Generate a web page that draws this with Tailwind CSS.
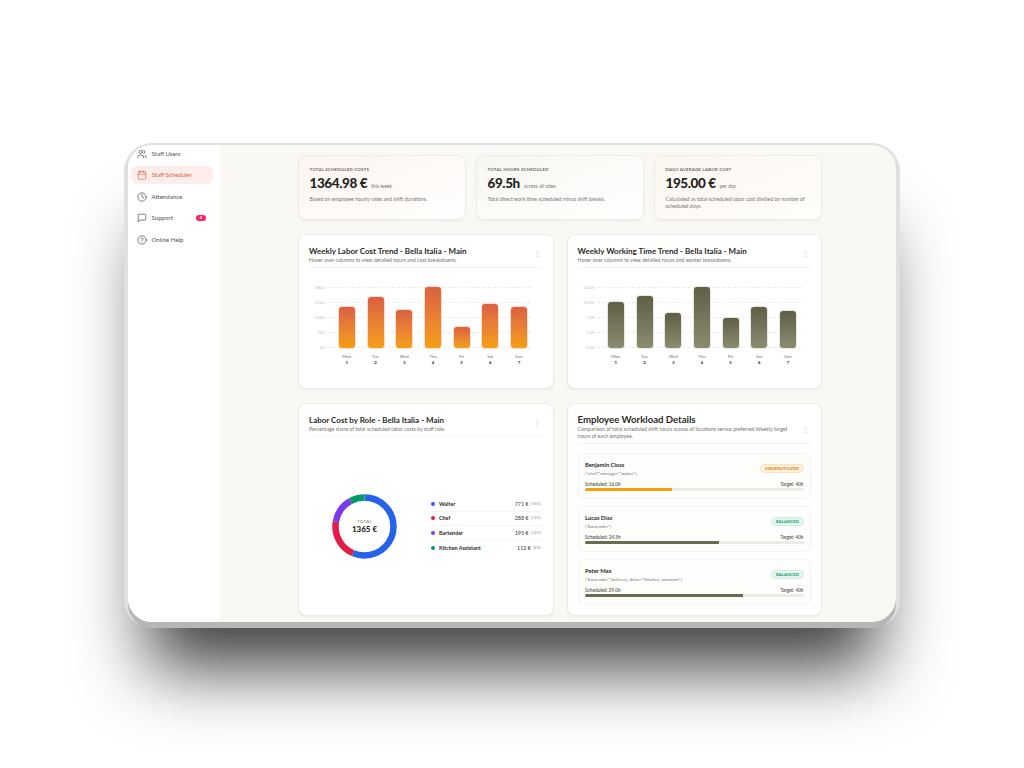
<!DOCTYPE html>
<html lang="en">
<head>
<meta charset="utf-8">
<title>Staff Scheduler</title>
<script src="https://cdn.jsdelivr.net/npm/@tailwindcss/browser@4"></script>
</head>
<body class="bg-white font-['Lato','Noto_Sans',sans-serif] text-[#2b2a28] overflow-hidden">
<div class="w-[1024px] h-[768px] pt-[145px] pl-[128px] overflow-hidden">
  <div class="flex w-[768px] h-[477px] rounded-[24px] overflow-hidden bg-[#f9f8f4] shadow-[0_6px_0_0_#b6b6b6,0_2px_0_4px_#e0e0e0,0_66px_70px_-20px_rgba(0,0,0,0.76)]">
    <!-- Sidebar -->
    <aside class="w-[92px] shrink-0 bg-white pl-[3px] pr-[7px] -mt-[0.5px] flex flex-col gap-[3.5px] text-[6.1px] font-medium text-[#5f5f5a]">
      <div class="h-[18px] flex items-center gap-[4.5px] pl-[6px]">
        <svg class="w-[10px] h-[10px]" viewBox="0 0 24 24" fill="none" stroke="#55554f" stroke-width="1.8" stroke-linecap="round" stroke-linejoin="round"><path d="M16 21v-2a4 4 0 0 0-4-4H6a4 4 0 0 0-4 4v2"/><circle cx="9" cy="7" r="4"/><path d="M22 21v-2a4 4 0 0 0-3-3.87"/><path d="M16 3.13a4 4 0 0 1 0 7.75"/></svg>
        <span>Staff Users</span>
      </div>
      <div class="h-[18px] flex items-center gap-[4.5px] pl-[6px] rounded-[6px] bg-[#fdeeeb] text-[#e2674f]">
        <svg class="w-[10px] h-[10px]" viewBox="0 0 24 24" fill="none" stroke="#e2674f" stroke-width="1.8" stroke-linecap="round" stroke-linejoin="round"><rect x="3" y="4" width="18" height="18" rx="2"/><path d="M16 2v4M8 2v4M3 10h18"/></svg>
        <span>Staff Scheduler</span>
      </div>
      <div class="h-[18px] flex items-center gap-[4.5px] pl-[6px]">
        <svg class="w-[10px] h-[10px]" viewBox="0 0 24 24" fill="none" stroke="#55554f" stroke-width="1.8" stroke-linecap="round" stroke-linejoin="round"><circle cx="12" cy="12" r="10"/><path d="M12 6v6l4 2"/></svg>
        <span>Attendance</span>
      </div>
      <div class="h-[18px] flex items-center gap-[4.5px] pl-[6px] pr-[7px]">
        <svg class="w-[10px] h-[10px]" viewBox="0 0 24 24" fill="none" stroke="#55554f" stroke-width="1.8" stroke-linecap="round" stroke-linejoin="round"><path d="M21 15a2 2 0 0 1-2 2H7l-4 4V5a2 2 0 0 1 2-2h14a2 2 0 0 1 2 2z"/></svg>
        <span class="flex-1">Support</span>
        <span class="w-[10px] h-[6.5px] rounded-full bg-[#f5245f] text-white text-[4px] font-bold flex items-center justify-center">4</span>
      </div>
      <div class="h-[18px] flex items-center gap-[4.5px] pl-[6px]">
        <svg class="w-[10px] h-[10px]" viewBox="0 0 24 24" fill="none" stroke="#55554f" stroke-width="1.8" stroke-linecap="round" stroke-linejoin="round"><circle cx="12" cy="12" r="10"/><path d="M9.1 9a3 3 0 0 1 5.8 1c0 2-3 3-3 3"/><path d="M12 17h.01"/></svg>
        <span>Online Help</span>
      </div>
    </aside>
    <!-- Main -->
    <main class="flex-1 pl-[78px] pt-[10px]">
      <div class="w-[524px] flex flex-col gap-[14px]">
        <!-- KPI -->
        <div class="grid grid-cols-3 gap-[10px]">
          <div class="h-[65px] rounded-[8px] border border-[#eeece7] shadow-[0_1px_2px_rgba(0,0,0,0.06)] bg-gradient-to-br from-[#fcf4ef] to-white px-[10.5px] pt-[11px]">
            <div class="text-[4.4px] leading-[6px] font-bold tracking-[0.2px] uppercase text-[#6f6e68]">Total Scheduled Costs</div>
            <div class="flex items-baseline gap-[4px] mt-[2px] h-[16px] leading-[16px]"><span class="text-[13.5px] font-black tracking-[-0.4px] text-[#262522]">1364.98 €</span><span class="text-[5px] text-[#77766f]">this week</span></div>
            <div class="text-[5.2px] leading-[7.2px] mt-[4.5px] text-[#77766f]">Based on employee hourly rates and shift durations.</div>
          </div>
          <div class="h-[65px] rounded-[8px] border border-[#eeece7] shadow-[0_1px_2px_rgba(0,0,0,0.06)] bg-gradient-to-br from-[#f6f6f1] to-white px-[10.5px] pt-[11px]">
            <div class="text-[4.4px] leading-[6px] font-bold tracking-[0.2px] uppercase text-[#6f6e68]">Total Hours Scheduled</div>
            <div class="flex items-baseline gap-[4px] mt-[2px] h-[16px] leading-[16px]"><span class="text-[13.5px] font-black tracking-[-0.4px] text-[#262522]">69.5h</span><span class="text-[5px] text-[#77766f]">across all roles</span></div>
            <div class="text-[5.2px] leading-[7.2px] mt-[4.5px] text-[#77766f]">Total direct work time scheduled minus shift breaks.</div>
          </div>
          <div class="h-[65px] rounded-[8px] border border-[#eeece7] shadow-[0_1px_2px_rgba(0,0,0,0.06)] bg-gradient-to-br from-[#fbf5ef] to-[#fffefb] px-[10.5px] pt-[11px]">
            <div class="text-[4.4px] leading-[6px] font-bold tracking-[0.2px] uppercase text-[#6f6e68]">Daily Average Labor Cost</div>
            <div class="flex items-baseline gap-[4px] mt-[2px] h-[16px] leading-[16px]"><span class="text-[13.5px] font-black tracking-[-0.4px] text-[#262522]">195.00 €</span><span class="text-[5px] text-[#77766f]">per day</span></div>
            <div class="text-[5.2px] leading-[7.2px] mt-[4.5px] text-[#77766f]">Calculated as total scheduled labor cost divided by number of scheduled days.</div>
          </div>
        </div>
        <!-- Charts -->
        <div class="grid grid-cols-2 gap-[13px]">
          <section class="h-[155px] rounded-[8px] bg-white border border-[#eeece7] shadow-[0_1px_2px_rgba(0,0,0,0.06)] px-[10px] pt-[11px]">
            <div class="relative border-b border-[#f3f2ee] h-[22px]">
              <h2 class="text-[8px] leading-[10px] font-bold text-[#2b2a28]">Weekly Labor Cost Trend - Bella Italia - Main</h2>
              <p class="text-[5.2px] leading-[7px] mt-[1px] text-[#77766f]">Hover over columns to view detailed hours and cost breakdowns.</p>
              <svg class="absolute right-[4px] top-[5px] w-[3px] h-[6px]" viewBox="0 0 3 6" fill="#cfcfca"><circle cx="0.6" cy="0.7" r="0.5"/><circle cx="2.4" cy="0.7" r="0.5"/><circle cx="0.6" cy="3" r="0.5"/><circle cx="2.4" cy="3" r="0.5"/><circle cx="0.6" cy="5.3" r="0.5"/><circle cx="2.4" cy="5.3" r="0.5"/></svg>
            </div>
            <div class="relative ml-[18px] w-[204px] h-[61px] mt-[19px]">
              <div class="absolute inset-0 flex flex-col justify-between">
                <div class="relative border-t border-dashed border-[#ecebe7]"><span class="absolute right-full mr-[2px] -top-[3px] text-[4.4px] leading-[5px] text-[#c4c3bd]">280€</span></div>
                <div class="relative border-t border-dashed border-[#ecebe7]"><span class="absolute right-full mr-[2px] -top-[3px] text-[4.4px] leading-[5px] text-[#c4c3bd]">210€</span></div>
                <div class="relative border-t border-dashed border-[#ecebe7]"><span class="absolute right-full mr-[2px] -top-[3px] text-[4.4px] leading-[5px] text-[#c4c3bd]">140€</span></div>
                <div class="relative border-t border-dashed border-[#ecebe7]"><span class="absolute right-full mr-[2px] -top-[3px] text-[4.4px] leading-[5px] text-[#c4c3bd]">70€</span></div>
                <div class="relative border-t border-dashed border-[#ecebe7]"><span class="absolute right-full mr-[2px] -top-[3px] text-[4.4px] leading-[5px] text-[#c4c3bd]">0€</span></div>
              </div>
              <div class="relative h-full pl-[5.5px] grid grid-cols-[repeat(7,28.7px)] items-end justify-items-center">
                <div class="w-[16px] h-[41px] rounded-[3px] bg-gradient-to-b from-[#db6040] to-[#f59f10] ring-1 ring-[#f8b9a5]/50"></div>
                <div class="w-[16px] h-[51px] rounded-[3px] bg-gradient-to-b from-[#db6040] to-[#f59f10] ring-1 ring-[#f8b9a5]/50"></div>
                <div class="w-[16px] h-[38px] rounded-[3px] bg-gradient-to-b from-[#db6040] to-[#f59f10] ring-1 ring-[#f8b9a5]/50"></div>
                <div class="w-[16px] h-[61px] rounded-[3px] bg-gradient-to-b from-[#db6040] to-[#f59f10] ring-1 ring-[#f8b9a5]/50"></div>
                <div class="w-[16px] h-[21px] rounded-[3px] bg-gradient-to-b from-[#db6040] to-[#f59f10] ring-1 ring-[#f8b9a5]/50"></div>
                <div class="w-[16px] h-[44px] rounded-[3px] bg-gradient-to-b from-[#db6040] to-[#f59f10] ring-1 ring-[#f8b9a5]/50"></div>
                <div class="w-[16px] h-[41px] rounded-[3px] bg-gradient-to-b from-[#db6040] to-[#f59f10] ring-1 ring-[#f8b9a5]/50"></div>
              </div>
              <div class="pl-[5.5px] grid grid-cols-[repeat(7,28.7px)] justify-items-center mt-[6px] text-[4.4px] leading-[5.5px] text-center text-[#6f6e68]">
                <div>Mon<div class="font-bold text-[#2b2a28]">1</div></div>
                <div>Tue<div class="font-bold text-[#2b2a28]">2</div></div>
                <div>Wed<div class="font-bold text-[#2b2a28]">3</div></div>
                <div>Thu<div class="font-bold text-[#2b2a28]">4</div></div>
                <div>Fri<div class="font-bold text-[#2b2a28]">5</div></div>
                <div>Sat<div class="font-bold text-[#2b2a28]">6</div></div>
                <div>Sun<div class="font-bold text-[#2b2a28]">7</div></div>
              </div>
            </div>
          </section>
          <section class="h-[155px] rounded-[8px] bg-white border border-[#eeece7] shadow-[0_1px_2px_rgba(0,0,0,0.06)] px-[10px] pt-[11px]">
            <div class="relative border-b border-[#f3f2ee] h-[22px]">
              <h2 class="text-[8px] leading-[10px] font-bold text-[#2b2a28]">Weekly Working Time Trend - Bella Italia - Main</h2>
              <p class="text-[5.2px] leading-[7px] mt-[1px] text-[#77766f]">Hover over columns to view detailed hours and worker breakdowns.</p>
              <svg class="absolute right-[4px] top-[5px] w-[3px] h-[6px]" viewBox="0 0 3 6" fill="#cfcfca"><circle cx="0.6" cy="0.7" r="0.5"/><circle cx="2.4" cy="0.7" r="0.5"/><circle cx="0.6" cy="3" r="0.5"/><circle cx="2.4" cy="3" r="0.5"/><circle cx="0.6" cy="5.3" r="0.5"/><circle cx="2.4" cy="5.3" r="0.5"/></svg>
            </div>
            <div class="relative ml-[19px] w-[204px] h-[61px] mt-[19px]">
              <div class="absolute inset-0 flex flex-col justify-between">
                <div class="relative border-t border-dashed border-[#ecebe7]"><span class="absolute right-full mr-[2px] -top-[3px] text-[4.4px] leading-[5px] text-[#c4c3bd]">14.0h</span></div>
                <div class="relative border-t border-dashed border-[#ecebe7]"><span class="absolute right-full mr-[2px] -top-[3px] text-[4.4px] leading-[5px] text-[#c4c3bd]">10.5h</span></div>
                <div class="relative border-t border-dashed border-[#ecebe7]"><span class="absolute right-full mr-[2px] -top-[3px] text-[4.4px] leading-[5px] text-[#c4c3bd]">7.0h</span></div>
                <div class="relative border-t border-dashed border-[#ecebe7]"><span class="absolute right-full mr-[2px] -top-[3px] text-[4.4px] leading-[5px] text-[#c4c3bd]">3.5h</span></div>
                <div class="relative border-t border-dashed border-[#ecebe7]"><span class="absolute right-full mr-[2px] -top-[3px] text-[4.4px] leading-[5px] text-[#c4c3bd]">0.0h</span></div>
              </div>
              <div class="relative h-full pl-[5px] grid grid-cols-[repeat(7,28.7px)] items-end justify-items-center">
                <div class="w-[16px] h-[46px] rounded-[3px] bg-gradient-to-b from-[#5f5f47] to-[#8c8c70] ring-1 ring-[#cfcfc0]/50"></div>
                <div class="w-[16px] h-[52px] rounded-[3px] bg-gradient-to-b from-[#5f5f47] to-[#8c8c70] ring-1 ring-[#cfcfc0]/50"></div>
                <div class="w-[16px] h-[35px] rounded-[3px] bg-gradient-to-b from-[#5f5f47] to-[#8c8c70] ring-1 ring-[#cfcfc0]/50"></div>
                <div class="w-[16px] h-[61px] rounded-[3px] bg-gradient-to-b from-[#5f5f47] to-[#8c8c70] ring-1 ring-[#cfcfc0]/50"></div>
                <div class="w-[16px] h-[30px] rounded-[3px] bg-gradient-to-b from-[#5f5f47] to-[#8c8c70] ring-1 ring-[#cfcfc0]/50"></div>
                <div class="w-[16px] h-[41px] rounded-[3px] bg-gradient-to-b from-[#5f5f47] to-[#8c8c70] ring-1 ring-[#cfcfc0]/50"></div>
                <div class="w-[16px] h-[37px] rounded-[3px] bg-gradient-to-b from-[#5f5f47] to-[#8c8c70] ring-1 ring-[#cfcfc0]/50"></div>
              </div>
              <div class="pl-[5px] grid grid-cols-[repeat(7,28.7px)] justify-items-center mt-[6px] text-[4.4px] leading-[5.5px] text-center text-[#6f6e68]">
                <div>Mon<div class="font-bold text-[#2b2a28]">1</div></div>
                <div>Tue<div class="font-bold text-[#2b2a28]">2</div></div>
                <div>Wed<div class="font-bold text-[#2b2a28]">3</div></div>
                <div>Thu<div class="font-bold text-[#2b2a28]">4</div></div>
                <div>Fri<div class="font-bold text-[#2b2a28]">5</div></div>
                <div>Sat<div class="font-bold text-[#2b2a28]">6</div></div>
                <div>Sun<div class="font-bold text-[#2b2a28]">7</div></div>
              </div>
            </div>
          </section>
        </div>
        <!-- Bottom row -->
        <div class="grid grid-cols-2 gap-[13px]">
          <section class="h-[213px] rounded-[8px] bg-white border border-[#eeece7] shadow-[0_1px_2px_rgba(0,0,0,0.06)] px-[10px] pt-[11px]">
            <div class="relative border-b border-[#f8f7f4] h-[22px]">
              <h2 class="text-[8px] leading-[10px] font-bold text-[#2b2a28]">Labor Cost by Role - Bella Italia - Main</h2>
              <p class="text-[5.2px] leading-[7px] mt-[1px] text-[#77766f]">Percentage share of total scheduled labor costs by staff role.</p>
              <svg class="absolute right-[4px] top-[5px] w-[3px] h-[6px]" viewBox="0 0 3 6" fill="#cfcfca"><circle cx="0.6" cy="0.7" r="0.5"/><circle cx="2.4" cy="0.7" r="0.5"/><circle cx="0.6" cy="3" r="0.5"/><circle cx="2.4" cy="3" r="0.5"/><circle cx="0.6" cy="5.3" r="0.5"/><circle cx="2.4" cy="5.3" r="0.5"/></svg>
            </div>
            <div class="flex items-center mt-[56.5px] pl-[23px]">
              <div class="relative w-[65px] h-[65px] shrink-0">
                <svg class="w-full h-full -rotate-90" viewBox="0 0 65 65" fill="none" stroke-width="6.5">
                  <circle cx="32.5" cy="32.5" r="29" stroke="#2563eb" pathLength="100" stroke-dasharray="56.5 43.5" stroke-dashoffset="0"/>
                  <circle cx="32.5" cy="32.5" r="29" stroke="#e11d48" pathLength="100" stroke-dasharray="21.1 78.9" stroke-dashoffset="-56.5"/>
                  <circle cx="32.5" cy="32.5" r="29" stroke="#7c3aed" pathLength="100" stroke-dasharray="14.3 85.7" stroke-dashoffset="-77.6"/>
                  <circle cx="32.5" cy="32.5" r="29" stroke="#059669" pathLength="100" stroke-dasharray="8.1 91.9" stroke-dashoffset="-91.9"/>
                </svg>
                <div class="absolute inset-0 flex flex-col items-center justify-center">
                  <span class="text-[4.6px] leading-[6px] uppercase tracking-[0.2px] text-[#77766f]">Total</span>
                  <span class="text-[8px] leading-[10px] font-black text-[#2b2a28]">1365 €</span>
                </div>
              </div>
              <ul class="ml-[34px] w-[110px] text-[5.4px]">
                <li class="h-[14.5px] flex items-center border-b border-[#f5f4f0]"><span class="w-[4px] h-[4px] rounded-full bg-[#2563eb] mr-[4px]"></span><span class="font-bold flex-1">Waiter</span><span class="font-semibold text-[#55554f]">771 €</span><span class="ml-[2px] text-[4.2px] text-[#a0a09a]">(56%)</span></li>
                <li class="h-[14.5px] flex items-center border-b border-[#f5f4f0]"><span class="w-[4px] h-[4px] rounded-full bg-[#e11d48] mr-[4px]"></span><span class="font-bold flex-1">Chef</span><span class="font-semibold text-[#55554f]">288 €</span><span class="ml-[2px] text-[4.2px] text-[#a0a09a]">(21%)</span></li>
                <li class="h-[14.5px] flex items-center border-b border-[#f5f4f0]"><span class="w-[4px] h-[4px] rounded-full bg-[#9333ea] mr-[4px]"></span><span class="font-bold flex-1">Bartender</span><span class="font-semibold text-[#55554f]">195 €</span><span class="ml-[2px] text-[4.2px] text-[#a0a09a]">(14%)</span></li>
                <li class="h-[14.5px] flex items-center"><span class="w-[4px] h-[4px] rounded-full bg-[#059669] mr-[4px]"></span><span class="font-bold flex-1">Kitchen Assistant</span><span class="font-semibold text-[#55554f]">112 €</span><span class="ml-[2px] text-[4.2px] text-[#a0a09a]">(8%)</span></li>
              </ul>
            </div>
          </section>
          <section class="h-[213px] rounded-[8px] bg-white border border-[#eeece7] shadow-[0_1px_2px_rgba(0,0,0,0.06)] px-[10px] pt-[10px]">
            <div class="relative border-b border-[#f3f2ee] h-[30px] pr-[14px]">
              <h2 class="text-[9.6px] leading-[11px] font-bold text-[#2b2a28]">Employee Workload Details</h2>
              <p class="text-[5.2px] leading-[7.2px] mt-[1px] text-[#77766f]">Comparison of total scheduled shift hours across all locations versus preferred Weekly target hours of each employee.</p>
              <svg class="absolute right-[4px] top-[13px] w-[3px] h-[6px]" viewBox="0 0 3 6" fill="#cfcfca"><circle cx="0.6" cy="0.7" r="0.5"/><circle cx="2.4" cy="0.7" r="0.5"/><circle cx="0.6" cy="3" r="0.5"/><circle cx="2.4" cy="3" r="0.5"/><circle cx="0.6" cy="5.3" r="0.5"/><circle cx="2.4" cy="5.3" r="0.5"/></svg>
            </div>
            <div class="mt-[9px] flex flex-col gap-[7px]">
              <article class="h-[46px] rounded-[6px] border border-[#f5f4f0] bg-[#fdfdfb] px-[6.5px] pt-[7px]">
                <div class="flex justify-between items-start h-[15px]">
                  <div><div class="text-[5.8px] leading-[7px] font-bold">Benjamin Closs</div><div class="text-[4.6px] leading-[6px] mt-[1.5px] text-[#77766f]">["chef","manager","waiter"]</div></div>
                  <span class="mt-[3px] h-[9px] px-[3.5px] rounded-full bg-[#fff3e0] border border-[#fde3bd] text-[4.2px] leading-[7px] font-bold tracking-[0.1px] text-[#d9780a]">UNDERUTILIZED</span>
                </div>
                <div class="flex justify-between mt-[5px] text-[4.7px] leading-[6px] font-semibold text-[#55554f]"><span>Scheduled: 16.0h</span><span>Target: 40h</span></div>
                <div class="h-[3px] mt-[1px] rounded-full bg-[#ecebe5] overflow-hidden"><div class="h-full w-[40%] bg-[#f59e0b]"></div></div>
              </article>
              <article class="h-[46px] rounded-[6px] border border-[#f5f4f0] bg-[#fdfdfb] px-[6.5px] pt-[7px]">
                <div class="flex justify-between items-start h-[15px]">
                  <div><div class="text-[5.8px] leading-[7px] font-bold">Lucas Diaz</div><div class="text-[4.6px] leading-[6px] mt-[1.5px] text-[#77766f]">["bartender"]</div></div>
                  <span class="mt-[3px] h-[9px] px-[3.5px] rounded-full bg-[#e4f6ee] border border-[#cdeee0] text-[4.2px] leading-[7px] font-bold tracking-[0.1px] text-[#0f9d6c]">BALANCED</span>
                </div>
                <div class="flex justify-between mt-[5px] text-[4.7px] leading-[6px] font-semibold text-[#55554f]"><span>Scheduled: 24.5h</span><span>Target: 40h</span></div>
                <div class="h-[3px] mt-[1px] rounded-full bg-[#ecebe5] overflow-hidden"><div class="h-full w-[61.25%] bg-[#6b6b4f]"></div></div>
              </article>
              <article class="h-[46px] rounded-[6px] border border-[#f5f4f0] bg-[#fdfdfb] px-[6.5px] pt-[7px]">
                <div class="flex justify-between items-start h-[15px]">
                  <div><div class="text-[5.8px] leading-[7px] font-bold">Peter Max</div><div class="text-[4.6px] leading-[6px] mt-[1.5px] text-[#77766f]">["bartender","delivery_driver","kitchen_assistant"]</div></div>
                  <span class="mt-[3px] h-[9px] px-[3.5px] rounded-full bg-[#e4f6ee] border border-[#cdeee0] text-[4.2px] leading-[7px] font-bold tracking-[0.1px] text-[#0f9d6c]">BALANCED</span>
                </div>
                <div class="flex justify-between mt-[5px] text-[4.7px] leading-[6px] font-semibold text-[#55554f]"><span>Scheduled: 29.0h</span><span>Target: 40h</span></div>
                <div class="h-[3px] mt-[1px] rounded-full bg-[#ecebe5] overflow-hidden"><div class="h-full w-[72.5%] bg-[#6b6b4f]"></div></div>
              </article>
            </div>
          </section>
        </div>
      </div>
    </main>
  </div>
</div>
</body>
</html>
